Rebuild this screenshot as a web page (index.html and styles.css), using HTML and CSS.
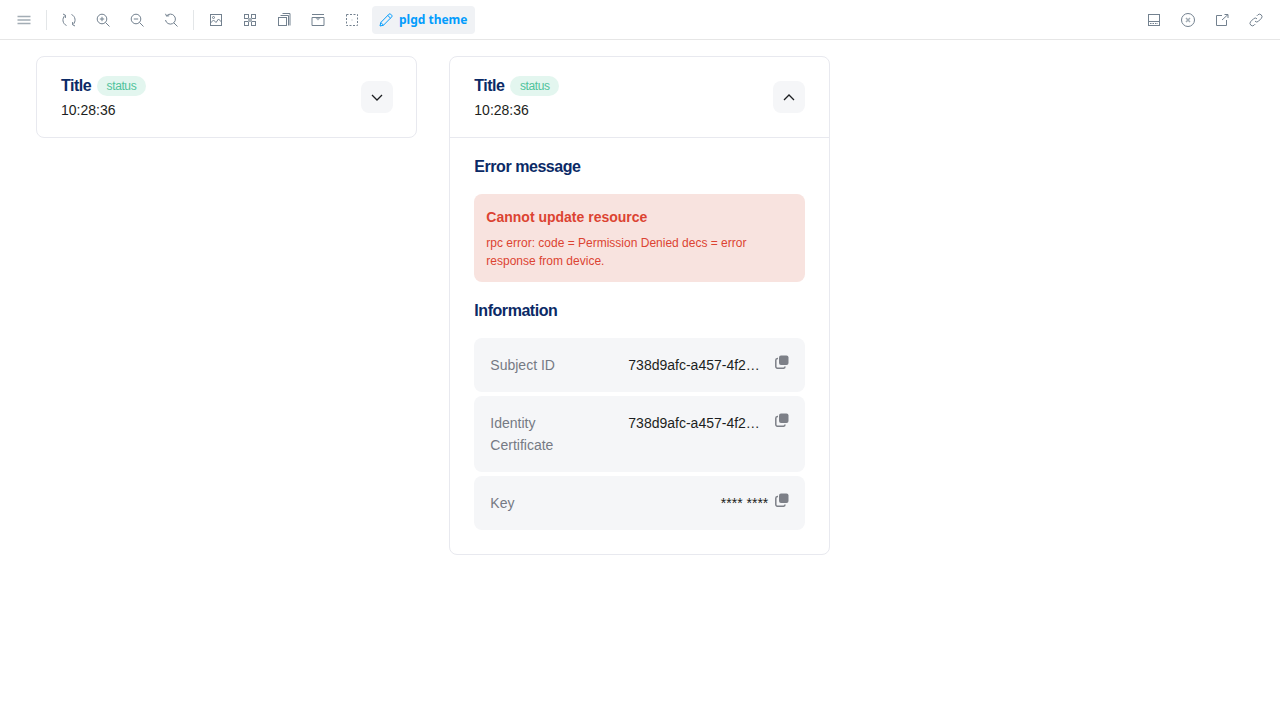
FILE: index.html
```html
<!DOCTYPE html>
<html lang="en">
<head>
    <meta charset="UTF-8">
    <title>plgd theme</title>
    <link rel="stylesheet" href="styles.css">
</head>
<body>

<header class="toolbar">
    <div class="toolbar-group">
        <button class="tool"><svg viewBox="0 0 14 14"><path class="thick" d="M.5 3.500h13M.5 7h13M.5 10.500h13"/></svg></button>
        <span class="divider"></span>
        <button class="tool"><svg viewBox="0 0 14 14"><path d="M4.500 12.500A6 6 0 0 1 3 2.500M1 1l2.500 1.300L3.300 5M9.500 1.500A6 6 0 0 1 11 11.500M13 13l-2.500-1.300.2-2.700"/></svg></button>
        <button class="tool"><svg viewBox="0 0 14 14"><circle cx="6" cy="6" r="4.800"/><path d="M9.500 9.500l4 4M6 3.800v4.400M3.800 6h4.400"/></svg></button>
        <button class="tool"><svg viewBox="0 0 14 14"><circle cx="6" cy="6" r="4.800"/><path d="M9.500 9.500l4 4M3.800 6h4.400"/></svg></button>
        <button class="tool"><svg viewBox="0 0 14 14"><path d="M2.500 3A5 5 0 1 1 1.500 7M9.800 9.800l3.700 3.700M1.500 .8L2.500 3l2.700-.2"/></svg></button>
        <span class="divider"></span>
        <button class="tool"><svg viewBox="0 0 14 14"><rect x="1.500" y="1.500" width="11" height="11"/><path d="M1.500 10l3-3 2.500 2.500 2.500-3.500 3 3"/><circle cx="4.500" cy="4.500" r="1"/></svg></button>
        <button class="tool"><svg viewBox="0 0 14 14"><rect x="1.500" y="1.500" width="4" height="4"/><rect x="8.500" y="1.500" width="4" height="4"/><rect x="1.500" y="8.500" width="4" height="4"/><rect x="8.500" y="8.500" width="4" height="4"/><rect class="solid" x="5" y="5" width="4" height="4"/></svg></button>
        <button class="tool"><svg viewBox="0 0 14 14"><rect x="1.500" y="4.500" width="8" height="8"/><path d="M3.500 2.500h8v10M5.500 .5h7.500v12"/></svg></button>
        <button class="tool"><svg viewBox="0 0 14 14"><path d="M1 1.500h12M1 12.500h12M1 4.500h12v8M1 4.500v8"/><path class="solid" d="M4.500 5h5L7 7.500z"/></svg></button>
        <button class="tool"><svg viewBox="0 0 14 14"><rect x="1.500" y="1.500" width="11" height="11" stroke-dasharray="2 1.500"/><rect class="solid" x="6.500" y="6.500" width="1" height="1"/></svg></button>
        <button class="theme-btn">
            <svg viewBox="0 0 14 14"><path d="M1 13l.8-3.500L10 1.200a1.200 1.200 0 0 1 1.700 0l1 1a1.200 1.200 0 0 1 0 1.700L4.500 12.200zM1.800 9.500l2.700 2.700M8.800 2.500l2.700 2.700"/></svg>
            plgd theme
        </button>
    </div>
    <div class="toolbar-group">
        <button class="tool"><svg viewBox="0 0 14 14"><rect x="1.500" y="1.500" width="11" height="11"/><path d="M1.500 8.500h11"/><path stroke-dasharray="1.500 1" d="M3 10.500h8"/></svg></button>
        <button class="tool"><svg viewBox="0 0 14 14"><circle cx="7" cy="7" r="6.500"/><path class="thick" d="M5 5l4 4M9 5l-4 4"/></svg></button>
        <button class="tool"><svg viewBox="0 0 14 14"><path d="M7 2.500H1.500v10h10V7M7 7l6-5.500M9.500 1.500h3.500V5"/></svg></button>
        <button class="tool"><svg viewBox="0 0 14 14"><path d="M6 8.200a2.500 2.500 0 0 0 3.500 0l3-3a2.500 2.500 0 0 0-3.500-3.500L7.800 2.900M8 5.800a2.500 2.500 0 0 0-3.500 0l-3 3a2.500 2.500 0 0 0 3.500 3.500l1.200-1.200"/></svg></button>
    </div>
</header>

<main class="cards">
    <section class="card">
        <div class="card-head">
            <div>
                <div class="title-row"><span class="title">Title</span><span class="status">status</span></div>
                <div class="time">10:28:36</div>
            </div>
            <button class="expand"><svg viewBox="0 0 12 7"><path d="M1 1l5 5 5-5"/></svg></button>
        </div>
    </section>

    <section class="card">
        <div class="card-head with-line">
            <div>
                <div class="title-row"><span class="title">Title</span><span class="status">status</span></div>
                <div class="time">10:28:36</div>
            </div>
            <button class="expand"><svg viewBox="0 0 12 7"><path d="M1 6l5-5 5 5"/></svg></button>
        </div>
        <div class="card-body">
            <h2 class="heading">Error message</h2>
            <div class="alert">
                <div class="alert-title">Cannot update resource</div>
                <div class="alert-text">rpc error: code = Permission Denied decs = error response from device.</div>
            </div>
            <h2 class="heading info-heading">Information</h2>
            <div class="rows">
                <div class="row">
                    <div class="label">Subject ID</div>
                    <div class="value"><span class="ellipsis">738d9afc-a457-4f2…</span><svg class="copy" viewBox="0 0 14 14"><rect x="4" y=".5" width="9.500" height="9.500" rx="2"/><path d="M3 3.500h-.5A1.800 1.800 0 0 0 .8 5.300v6.200a1.800 1.800 0 0 0 1.800 1.800h5.900A1.800 1.800 0 0 0 10 11.500"/></svg></div>
                </div>
                <div class="row">
                    <div class="label">Identity Certificate</div>
                    <div class="value"><span class="ellipsis">738d9afc-a457-4f2…</span><svg class="copy" viewBox="0 0 14 14"><rect x="4" y=".5" width="9.500" height="9.500" rx="2"/><path d="M3 3.500h-.5A1.800 1.800 0 0 0 .8 5.300v6.200a1.800 1.800 0 0 0 1.800 1.800h5.900A1.800 1.800 0 0 0 10 11.500"/></svg></div>
                </div>
                <div class="row">
                    <div class="label">Key</div>
                    <div class="value"><span class="secret">**** ****</span><svg class="copy" viewBox="0 0 14 14"><rect x="4" y=".5" width="9.500" height="9.500" rx="2"/><path d="M3 3.500h-.5A1.800 1.800 0 0 0 .8 5.300v6.200a1.800 1.800 0 0 0 1.800 1.800h5.900A1.800 1.800 0 0 0 10 11.500"/></svg></div>
                </div>
            </div>
        </div>
    </section>
</main>

</body>
</html>
```

FILE: styles.css
```css
* {
    box-sizing: border-box;
}
body {
    font-family: "Liberation Sans", Arial, sans-serif;
    margin: 0;
    background-color: #ffffff;
    color: #1c1e21;
}
button {
    border: 0;
    padding: 0;
    background: none;
    font: inherit;
}

/* toolbar */
.toolbar {
    display: flex;
    justify-content: space-between;
    align-items: center;
    height: 40px;
    padding: 0 7px;
    border-bottom: 1px solid #e6e6e6;
}
.toolbar-group {
    display: flex;
    align-items: center;
}
.tool {
    display: flex;
    align-items: center;
    justify-content: center;
    width: 34px;
    height: 28px;
}
.tool svg {
    width: 14px;
    height: 14px;
    fill: none;
    stroke: #73818f;
    stroke-width: 1;
}
.tool .solid {
    fill: #a9b2ba;
    stroke: none;
}
.tool .thick {
    stroke: #a3adb5;
    stroke-width: 1.500;
}
.divider {
    width: 1px;
    height: 20px;
    margin: 0 5px;
    background-color: #e3e6e8;
}
.theme-btn {
    display: flex;
    align-items: center;
    gap: 6px;
    height: 28px;
    margin-left: 3px;
    padding: 0 7px;
    border-radius: 4px;
    background-color: #f0f2f5;
    color: #029cfd;
    font-family: "Noto Sans", sans-serif;
    font-size: 12px;
    font-weight: 700;
}
.theme-btn svg {
    width: 14px;
    height: 14px;
    fill: none;
    stroke: #029cfd;
    stroke-width: 1;
}

/* cards */
.cards {
    display: flex;
    align-items: flex-start;
    gap: 32.330px;
    padding: 16px 36px;
}
.card {
    width: 381px;
    border: 1px solid #e8e9ef;
    border-radius: 8px;
}
.card-head {
    display: flex;
    justify-content: space-between;
    align-items: center;
    height: 80px;
    padding: 0 23px 0 24px;
}
.with-line {
    height: 81px;
    padding-right: 24px;
    border-bottom: 1px solid #e8e9ef;
}
.title-row {
    display: flex;
    align-items: center;
    gap: 6px;
    height: 20px;
    margin-top: 1px;
}
.title {
    color: #0b2a66;
    font-size: 16px;
    font-weight: 700;
    letter-spacing: -0.5px;
}
.status {
    padding: 0 9.500px;
    height: 20px;
    line-height: 21px;
    border-radius: 10px;
    background-color: #e3f6ef;
    color: #4fc39b;
    font-size: 12px;
    letter-spacing: -0.4px;
}
.time {
    margin-top: 4px;
    font-size: 14px;
    line-height: 20px;
}
.expand {
    display: flex;
    align-items: center;
    justify-content: center;
    width: 32px;
    height: 32px;
    border-radius: 8px;
    background-color: #f5f6f8;
}
.expand svg {
    width: 12px;
    height: 7px;
    fill: none;
    stroke: #1c1e21;
    stroke-width: 1.300;
}
.card-body {
    padding: 18px 24px 24px;
}
.heading {
    margin: 0;
    color: #0b2a66;
    font-size: 16px;
    line-height: 22px;
    font-weight: 700;
    letter-spacing: -0.45px;
}
.alert {
    margin-top: 16px;
    padding: 12px;
    height: 88px;
    border-radius: 8px;
    background-color: #f8e3df;
    color: #dc4332;
}
.alert-title {
    font-size: 14px;
    line-height: 22px;
    font-weight: 700;
}
.alert-text {
    margin-top: 6px;
    font-size: 12px;
    line-height: 18px;
}
.info-heading {
    margin-top: 18px;
}
.rows {
    display: flex;
    flex-direction: column;
    gap: 4px;
    margin-top: 16px;
}
.row {
    display: flex;
    justify-content: space-between;
    padding: 16px;
    border-radius: 8px;
    background-color: #f5f6f8;
    font-size: 14px;
    line-height: 22px;
}
.label {
    width: 110px;
    color: #757a84;
}
.value {
    display: flex;
    align-items: flex-start;
    gap: 15px;
}
.ellipsis {
    width: 132px;
    white-space: nowrap;
}
.secret {
    margin-right: -8px;
}
.copy {
    flex-shrink: 0;
    width: 14px;
    height: 14px;
    margin-top: 1px;
}
.copy rect {
    fill: #7d8088;
}
.copy path {
    fill: none;
    stroke: #7d8088;
    stroke-width: 1.500;
}
```
